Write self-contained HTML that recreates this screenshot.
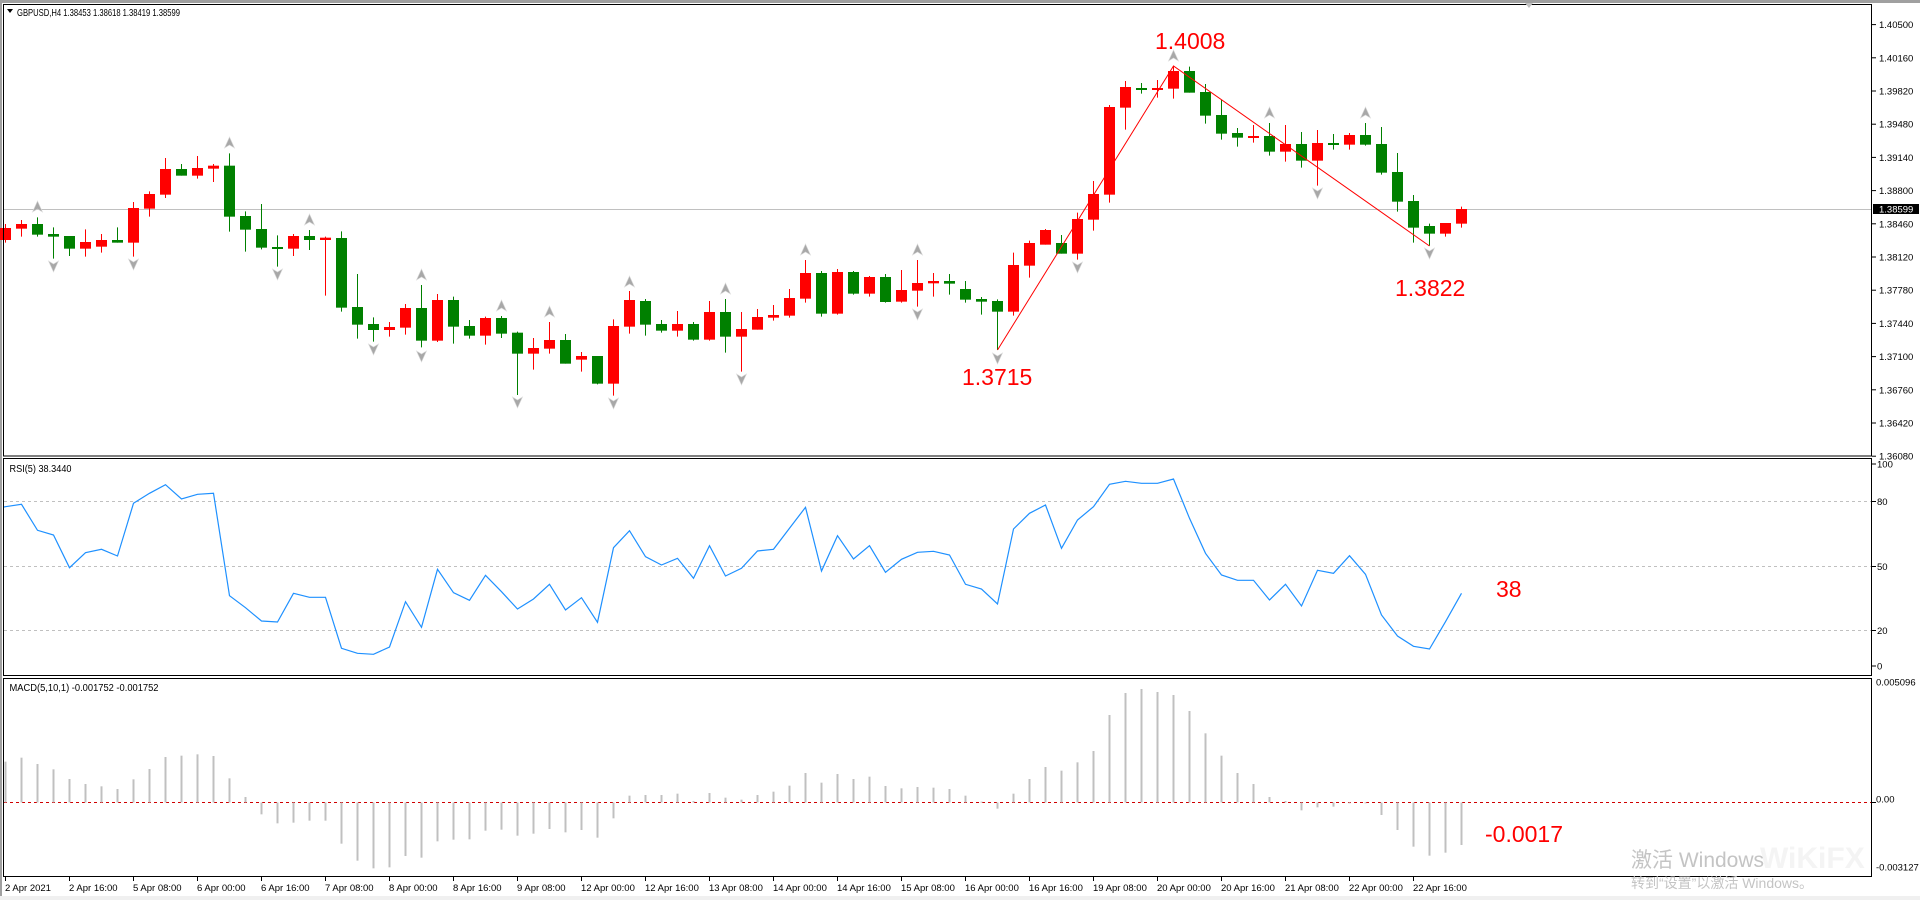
<!DOCTYPE html>
<html><head><meta charset="utf-8"><style>
html,body{margin:0;padding:0;background:#fff;width:1920px;height:900px;overflow:hidden}
svg{display:block}
text{font-family:"Liberation Sans","Noto Sans CJK SC",sans-serif}
</style></head><body>
<svg id="s" width="1920" height="900" viewBox="0 0 1920 900" xmlns="http://www.w3.org/2000/svg">
<rect x="0" y="0" width="1920" height="900" fill="#fff"/>
<rect x="0" y="0" width="1920" height="3" fill="#a0a0a0"/>
<rect x="0" y="0" width="2" height="900" fill="#a0a0a0"/>
<rect x="0" y="896" width="1920" height="4" fill="#f0f0f0"/>
<g id="grid"></g>
<g id="plot"></g>
<g fill="none" stroke="#000" stroke-width="1">
<rect x="3.5" y="4.5" width="1868" height="451.5"/>
<rect x="3.5" y="458.5" width="1868" height="217"/>
<rect x="3.5" y="678.5" width="1868" height="198"/>
</g>
<g id="axis" font-size="9.5" fill="#000"></g>
<text x="17" y="16" font-size="10.5" fill="#000" textLength="163" lengthAdjust="spacingAndGlyphs">GBPUSD,H4  1.38453 1.38618 1.38419 1.38599</text>
<path d="M7 9 L13 9 L10 13 Z" fill="#000"/>
<text x="9.5" y="472" font-size="10" fill="#000" textLength="62" lengthAdjust="spacingAndGlyphs">RSI(5) 38.3440</text>
<text x="9.5" y="691" font-size="10" fill="#000" textLength="149" lengthAdjust="spacingAndGlyphs">MACD(5,10,1) -0.001752 -0.001752</text>
<g font-size="23" fill="#ff0000">
<text x="1155" y="49">1.4008</text>
<text x="962" y="385">1.3715</text>
<text x="1395" y="296">1.3822</text>
<text x="1496" y="597">38</text>
<text x="1485" y="842">-0.0017</text>
</g>
<text x="1760" y="868" font-size="30" fill="#f4f4f4" font-weight="bold">WiKiFX</text>
<text x="1631" y="867" font-size="21" fill="#c4c4c4">激活 Windows</text>
<text x="1631" y="888" font-size="14" fill="#c4c4c4">转到“设置”以激活 Windows。</text>
<path d="M1525 3 L1533 3 L1529 8 Z" fill="#c0c0c0"/>
</svg>
<script>
var NS="http://www.w3.org/2000/svg";
function el(p,t,a,txt){var e=document.createElementNS(NS,t);for(var k in a)e.setAttribute(k,a[k]);if(txt!==undefined)e.textContent=txt;p.appendChild(e);return e;}
var plot=document.getElementById('plot'),grid=document.getElementById('grid'),axis=document.getElementById('axis');
function cx(i){return 5.5+16*i;}
var A=[
['R',294,330,282,338],['R',282,296,270,320],['G',282,314,262,320],['G',312,320,292,386],['G',318,356,318,378],
['R',336,356,298,380],['R',330,350,312,368],['G',330,338,292,338],['R',234,338,216,380],['R',192,236,184,260],
['R',117,194,84,204],['G',117,137,102,137],['R',114,137,78,146],['R',107,116,102,156],['G',107,260,70,305],
['G',258,299,244,365],['G',297,353,222,358],['G',351,356,316,410],['R',318,356,312,378],['G',318,330,300,360],
['R',323,330,320,497],['G',324,533,304,545],['G',531,584,432,626],['G',582,600,562,635],['R',591,600,576,620],
['R',534,593,522,614],['G',534,632,465,652],['R',510,632,492,636],['G',510,590,500,641],['G',588,617,570,626],
['R',564,617,560,644],
['G',564,611,558,624],['G',608,671,605,795],['R',654,671,624,719],['R',630,656,576,671],['G',630,701,612,701],
['R',678,689,666,725],['G',678,761,678,763],['R',588,761,568,797],['R',510,590,483,611],['G',513,584,507,617],
['G',582,602,570,608],['R',582,602,543,620],['G',582,629,576,632],['R',546,629,513,632],['G',546,620,507,668],
['R',597,620,546,725],['R',561,599,537,599],['R',555,563,525,572],['R',504,557,477,563],['R',429,506,390,518],
['G',429,551,423,560],['R',426,551,417,554],['G',426,491,423,494],['R',441,491,438,500],['G',441,516,432,518],
['R',480,515,420,518],['R',459,482,390,530],['R',453,460,429,500],['G',453,461,432,494],['G',477,509,453,518],
['G',507,515,501,554]];
var B=[
['G',843,875,838,990],['R',735,875,698,887],['R',669,737,662,773],['R',630,674,627,674],['G',669,701,645,701],
['R',597,701,578,719],['R',522,599,483,632],['R',261,524,255,548],['R',201,263,183,329],['G',204,209,189,221],
['R',204,209,180,233],['R',153,206,138,236],['G',153,218,140,218],['G',216,287,192,311],['G',285,341,240,359],
['G',339,353,324,380],['R',348,353,315,368],['G',348,395,309,407],['R',372,395,315,425],['G',372,422,336,443],
['R',369,422,330,497],['G',369,374,342,389],['R',345,374,339,389],['G',345,374,309,377],['G',372,458,321,464],
['G',456,545,399,575],['G',543,623,525,668],['G',618,641,611,677],['R',609,641,609,650],['R',567,611,560,623]];
var C=[];A.forEach(function(c){C.push([c[0],130+c[1]/3,130+c[2]/3,130+c[3]/3,130+c[4]/3]);});
B.forEach(function(c){C.push([c[0],20+c[1]/3,20+c[2]/3,20+c[3]/3,20+c[4]/3]);});
el(grid,'line',{x1:4,y1:209.5,x2:1871,y2:209.5,stroke:'#c0c0c0','stroke-width':1});
[501.5,566.5,630.5].forEach(function(y){el(grid,'line',{x1:4,y1:y,x2:1871,y2:y,stroke:'#c0c0c0','stroke-width':1,'stroke-dasharray':'3,3'});});
el(grid,'line',{x1:4,y1:802.5,x2:1871,y2:802.5,stroke:'#d00000','stroke-width':1,'stroke-dasharray':'3,3'});
C.forEach(function(c,i){
  var col=c[0]=='R'?'#ff0000':'#008000';var x=cx(i);
  el(plot,'line',{x1:x,y1:c[3],x2:x,y2:c[4],stroke:col,'stroke-width':1});
  var h=Math.max(c[2]-c[1],2);
  el(plot,'rect',{x:x-5.5,y:c[1],width:11,height:h,fill:col});
});
function up(i,y){var x=cx(i);el(plot,'path',{d:'M'+x+' '+(y-6)+' L'+(x+5)+' '+(y+5)+' L'+x+' '+(y+2)+' L'+(x-5)+' '+(y+5)+' Z',fill:'#a8a8a8',stroke:'#d8d8d8','stroke-width':0.6});}
function dn(i,y){var x=cx(i);el(plot,'path',{d:'M'+x+' '+(y+6)+' L'+(x+5)+' '+(y-5)+' L'+x+' '+(y-2)+' L'+(x-5)+' '+(y-5)+' Z',fill:'#a8a8a8',stroke:'#d8d8d8','stroke-width':0.6});}
[[2,207],[14,143],[19,220],[26,275],[31,306],[34,312],[39,282],[45,289],[50,250],[57,250],[73,56],[79,113],[85,113]].forEach(function(a){up(a[0],a[1]);});
[[3,266],[8,264],[17,274],[23,349],[26,356],[32,402],[38,403],[46,379],[57,314],[62,358],[67,267],[82,193],[89,253]].forEach(function(a){dn(a[0],a[1]);});
el(plot,'polyline',{points:cx(62)+',350 '+cx(73)+',66 '+cx(89)+',246',fill:'none',stroke:'#ff0000','stroke-width':1});
var R=[155,148,226,240,338,293,283,303,145,115,89,132,118,115,422,458,498,501,415,427,427,580,595,598,576,440,517,343,413,436,361,410,462,432,388,465,428,502,278,227,305,330,310,370,272,363,
340,288,283,220,157,348,242,312,272,352,313,292,289,300,388,402,447,222,175,150,280,195,155,88,79,85,85,72,190,295,360,376,376,435,388,453,346,355,302,358,480,543,574,582,500,415];
var pts=R.map(function(v,i){return cx(i)+','+(455+v/3).toFixed(1);}).join(' ');
el(plot,'polyline',{points:'4,'+(455+156/3)+' '+pts,fill:'none',stroke:'#1e90ff','stroke-width':1.2});
var M=[260,248,267,283,312,327,334,342,313,282,246,242,238,243,310,366,418,445,443,437,437,506,557,580,577,543,548,499,494,493,467,464,482,476,462,472,465,488,430,362,360,360,356,378,354,368,
374,360,350,332,294,323,297,312,305,333,340,336,338,342,362,380,401,356,312,276,287,262,228,120,54,42,51,60,108,175,242,294,327,366,378,406,397,395,382,382,420,465,515,542,533,510];
M.forEach(function(v,i){var y=675+v/3;el(plot,'rect',{x:cx(i)-1,y:Math.min(y,802.5),width:2,height:Math.max(Math.abs(y-802.5),1),fill:'#c0c0c0'});});
var P=['1.40500','1.40160','1.39820','1.39480','1.39140','1.38800','1.38460','1.38120','1.37780','1.37440','1.37100','1.36760','1.36420','1.36080'];
P.forEach(function(p,k){var y=24.6+33.2*k;el(axis,'line',{x1:1872,y1:y,x2:1876,y2:y,stroke:'#000'});el(axis,'text',{x:1879,y:y+3.5},p);});
el(axis,'rect',{x:1873,y:204,width:46,height:10,fill:'#000'});
el(axis,'text',{x:1879,y:212.5,fill:'#fff'},'1.38599');
[['100',464],['80',501.5],['50',566.5],['20',630.5],['0',666]].forEach(function(a){el(axis,'line',{x1:1872,y1:a[1],x2:1876,y2:a[1],stroke:'#000'});el(axis,'text',{x:1877,y:a[1]+3.5},a[0]);});
[['0.005096',682],['0.00',799],['-0.003127',867]].forEach(function(a){el(axis,'text',{x:1876,y:a[1]+3.5},a[0]);});
el(axis,'line',{x1:1872,y1:802.5,x2:1876,y2:802.5,stroke:'#000'});
var D=['2 Apr 2021','2 Apr 16:00','5 Apr 08:00','6 Apr 00:00','6 Apr 16:00','7 Apr 08:00','8 Apr 00:00','8 Apr 16:00','9 Apr 08:00','12 Apr 00:00','12 Apr 16:00','13 Apr 08:00','14 Apr 00:00','14 Apr 16:00','15 Apr 08:00','16 Apr 00:00','16 Apr 16:00','19 Apr 08:00','20 Apr 00:00','20 Apr 16:00','21 Apr 08:00','22 Apr 00:00','22 Apr 16:00'];
D.forEach(function(d,k){var x=cx(4*k);el(axis,'line',{x1:x,y1:877,x2:x,y2:881,stroke:'#000'});el(axis,'text',{x:x-0.5,y:891},d);});
</script>
</body></html>
